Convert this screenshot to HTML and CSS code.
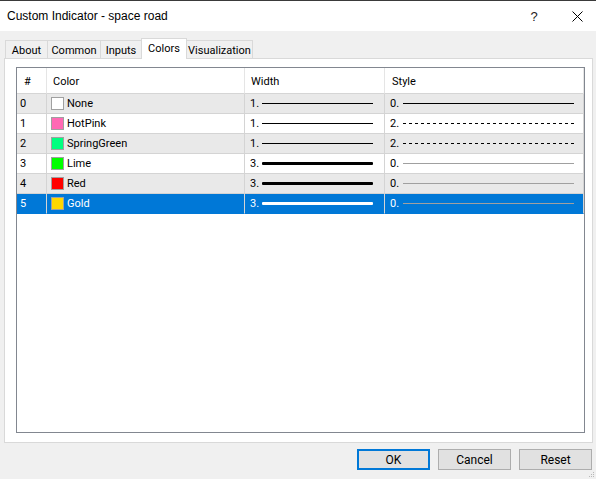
FILE: index.html
```html
<!DOCTYPE html>
<html>
<head>
<meta charset="utf-8">
<link rel="stylesheet" href="styles.css">
</head>
<body>
<div class="window">
  <div class="titlebar">
    <div class="title">Custom Indicator - space road</div>
    <div class="tb-btn help">?</div>
    <div class="tb-btn close">
      <svg width="11" height="11" viewBox="0 0 11 11"><path d="M0.5 0.5 L10.5 10.5 M10.5 0.5 L0.5 10.5" stroke="#000" stroke-width="1" fill="none"/></svg>
    </div>
  </div>
  <div class="content">
    <div class="tabs">
      <div class="tab w-about">About</div>
      <div class="tab w-common">Common</div>
      <div class="tab w-inputs">Inputs</div>
      <div class="tab sel w-colors">Colors</div>
      <div class="tab w-vis">Visualization</div>
    </div>
    <div class="panel">
      <div class="list">
        <div class="grid">
          <div class="hd c-num">#</div>
          <div class="hd c-color">Color</div>
          <div class="hd c-width">Width</div>
          <div class="hd c-style">Style</div>

          <div class="cell c-num alt">0</div>
          <div class="cell c-color alt"><span class="sw sw-none"></span>None</div>
          <div class="cell c-width alt"><span class="num">1.</span><span class="ln w1 black"></span></div>
          <div class="cell c-style alt"><span class="num">0.</span><span class="sl solid"></span></div>

          <div class="cell c-num">1</div>
          <div class="cell c-color"><span class="sw sw-hotpink"></span>HotPink</div>
          <div class="cell c-width"><span class="num">1.</span><span class="ln w1 black"></span></div>
          <div class="cell c-style"><span class="num">2.</span><span class="sl dash"></span></div>

          <div class="cell c-num alt">2</div>
          <div class="cell c-color alt"><span class="sw sw-spring"></span>SpringGreen</div>
          <div class="cell c-width alt"><span class="num">1.</span><span class="ln w1 black"></span></div>
          <div class="cell c-style alt"><span class="num">2.</span><span class="sl dash"></span></div>

          <div class="cell c-num">3</div>
          <div class="cell c-color"><span class="sw sw-lime"></span>Lime</div>
          <div class="cell c-width"><span class="num">3.</span><span class="ln w3 black"></span></div>
          <div class="cell c-style"><span class="num">0.</span><span class="sl gray"></span></div>

          <div class="cell c-num alt">4</div>
          <div class="cell c-color alt"><span class="sw sw-red"></span>Red</div>
          <div class="cell c-width alt"><span class="num">3.</span><span class="ln w3 black"></span></div>
          <div class="cell c-style alt"><span class="num">0.</span><span class="sl gray"></span></div>

          <div class="cell c-num selrow">5</div>
          <div class="cell c-color selrow"><span class="sw sw-gold"></span>Gold</div>
          <div class="cell c-width selrow"><span class="num">3.</span><span class="ln w3 white"></span></div>
          <div class="cell c-style selrow"><span class="num">0.</span><span class="sl gray"></span></div>
        </div>
      </div>
    </div>
    <div class="buttons">
      <div class="btn default">OK</div>
      <div class="btn">Cancel</div>
      <div class="btn">Reset</div>
    </div>
    <div class="grip">
      <svg width="6" height="6" viewBox="0 0 6 6">
        <rect x="4" y="0" width="1" height="1" fill="#b8b8b8"/>
        <rect x="2" y="2" width="1" height="1" fill="#b8b8b8"/>
        <rect x="4" y="2" width="1" height="1" fill="#b8b8b8"/>
        <rect x="0" y="4" width="1" height="1" fill="#b8b8b8"/>
        <rect x="2" y="4" width="1" height="1" fill="#b8b8b8"/>
        <rect x="4" y="4" width="1" height="1" fill="#b8b8b8"/>
      </svg>
    </div>
  </div>
</div>
</body>
</html>
```
FILE: styles.css
```css
* { box-sizing: border-box; }
html, body { margin: 0; padding: 0; }
body {
  width: 596px;
  height: 479px;
  overflow: hidden;
  background: #f0f0f0;
  font-family: Roboto, "Liberation Sans", Arial, sans-serif;
  font-size: 11px;
  color: #000;
}
.window {
  width: 596px;
  height: 479px;
  display: flex;
  flex-direction: column;
}
.titlebar {
  height: 31px;
  background: #fff;
  border-top: 1px solid #3a3a3a;
  display: flex;
  align-items: center;
}
.title {
  flex: 1;
  padding-left: 7px;
  font-family: "Liberation Sans", Arial, sans-serif;
  font-size: 12px;
  padding-bottom: 1px;
}
.tb-btn {
  height: 30px;
  display: flex;
  align-items: center;
  justify-content: center;
}
.help {
  width: 48px;
  font-family: "Liberation Sans", Arial, sans-serif;
  font-size: 13px;
  color: #222;
}
.close { width: 38px; }
.content {
  flex: 1;
  position: relative;
  display: flex;
  flex-direction: column;
}
.tabs {
  margin-top: 7px;
  padding-left: 5px;
  height: 20px;
  display: flex;
  align-items: flex-end;
}
.tab {
  height: 18px;
  border: 1px solid #d9d9d9;
  border-bottom: none;
  background: #f0f0f0;
  display: flex;
  align-items: center;
  justify-content: center;
  margin-left: -1px;
  padding-top: 1px;
}
.tab:first-child { margin-left: 0; }
.tab.sel {
  height: 21px;
  margin-bottom: -1px;
  background: #fff;
  position: relative;
  z-index: 1;
  padding-top: 0;
  padding-bottom: 2px;
}
.w-about { width: 43px; }
.w-common { width: 54px; }
.w-inputs { width: 42px; }
.w-colors { width: 46px; }
.w-vis { width: 67px; }
.panel {
  margin: 0 3px 0 4px;
  height: 385px;
  background: #fff;
  border: 1px solid #d9d9d9;
  padding: 8px 7px 9px 11px;
}
.list {
  height: 100%;
  border: 1px solid #828790;
  background: #fff;
}
.grid {
  display: grid;
  grid-template-columns: 30px 198px 140px 199px;
  grid-template-rows: 26px;
  grid-auto-rows: 20px;
}
.hd {
  height: 26px;
  border-right: 1px solid #e5e5e5;
  border-bottom: 1px solid #d5d5d5;
  display: flex;
  align-items: center;
  padding-left: 6px;
  padding-top: 2px;
}
.hd.c-num { padding-left: 7px; }
.hd.c-style { padding-left: 7px; }
.cell {
  height: 20px;
  border-right: 1px solid #d4d4d4;
  border-bottom: 1px solid #d4d4d4;
  display: flex;
  align-items: center;
  white-space: nowrap;
}
.cell.alt { background: #e9e9e9; }
.cell.selrow { background: #0078d7; color: #fff; border-bottom-color: #0078d7; }
.cell.c-num { padding-left: 3px; }
.cell.c-color { padding-left: 4px; }
.cell.c-width { padding-left: 5px; }
.cell.c-style { padding-left: 5px; }
.sw {
  width: 13px;
  height: 13px;
  border: 1px solid #a0a0a0;
  margin-right: 3px;
  flex: none;
}
.sw-none { background: #fff; }
.sw-hotpink { background: #ff69b4; }
.sw-spring { background: #00ff7f; }
.sw-lime { background: #00ff00; }
.sw-red { background: #ff0000; }
.sw-gold { background: #ffd700; }
.num { width: 12px; flex: none; }
.ln {
  display: block;
  width: 111px;
  margin-left: 0;
}
.ln.w1 { height: 1px; }
.ln.w3 { height: 3px; border-radius: 1px; }
.ln.black { background: #000; }
.ln.white { background: #fff; }
.sl {
  display: block;
  width: 171px;
  height: 1px;
  margin-left: 1px;
}
.sl.solid { background: #000; }
.sl.dash { background: repeating-linear-gradient(to right, #000 0 3px, transparent 3px 6px); }
.sl.gray { background: #a0a0a0; }
.buttons {
  margin-top: 6px;
  padding-right: 4px;
  display: flex;
  justify-content: flex-end;
  gap: 8px;
}
.btn {
  width: 73px;
  height: 21px;
  background: #e1e1e1;
  border: 1px solid #adadad;
  display: flex;
  align-items: center;
  justify-content: center;
  font-size: 12px;
}
.btn.default { border: 2px solid #0078d7; }
.grip {
  position: absolute;
  right: 1px;
  bottom: 1px;
  width: 6px;
  height: 6px;
  line-height: 0;
}
```
